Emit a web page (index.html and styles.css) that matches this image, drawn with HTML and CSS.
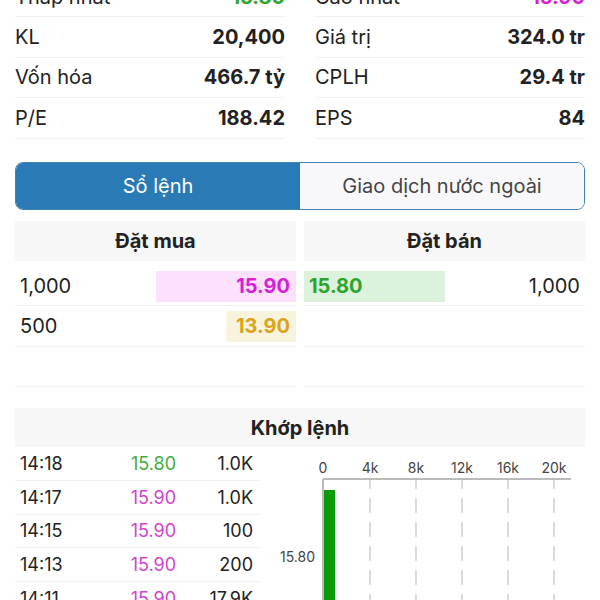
FILE: index.html
```html
<!DOCTYPE html>
<html lang="vi">
<head>
    <meta charset="UTF-8">
    <meta name="viewport" content="width=device-width, initial-scale=1.0">
    <title>Chi tiết cổ phiếu</title>
    <link rel="stylesheet" href="styles.css">
</head>
<body>
    <div class="page">
        <div class="stats">
            <div class="stats-col">
                <div class="stat-row"><span>Thấp nhất</span><b class="up">15.80</b></div>
                <div class="stat-row"><span>KL</span><b>20,400</b></div>
                <div class="stat-row"><span>Vốn hóa</span><b>466.7 tỷ</b></div>
                <div class="stat-row"><span>P/E</span><b>188.42</b></div>
            </div>
            <div class="stats-col">
                <div class="stat-row"><span>Cao nhất</span><b class="ceil">15.90</b></div>
                <div class="stat-row"><span>Giá trị</span><b>324.0 tr</b></div>
                <div class="stat-row"><span>CPLH</span><b>29.4 tr</b></div>
                <div class="stat-row"><span>EPS</span><b>84</b></div>
            </div>
        </div>

        <div class="tabs">
            <div class="tab active">Sổ lệnh</div>
            <div class="tab">Giao dịch nước ngoài</div>
        </div>

        <div class="orderbook">
            <div class="book-side buy">
                <div class="book-head">Đặt mua</div>
                <div class="book-row">
                    <span class="qty">1,000</span>
                    <span class="bar ceil-bg" style="width: 50%">15.90</span>
                </div>
                <div class="book-row">
                    <span class="qty">500</span>
                    <span class="bar ref-bg" style="width: 25%">13.90</span>
                </div>
                <div class="book-row"></div>
            </div>
            <div class="book-side sell">
                <div class="book-head">Đặt bán</div>
                <div class="book-row">
                    <span class="bar up-bg" style="width: 50%">15.80</span>
                    <span class="qty">1,000</span>
                </div>
                <div class="book-row"></div>
                <div class="book-row"></div>
            </div>
        </div>

        <div class="matched">
            <div class="matched-head">Khớp lệnh</div>
            <div class="matched-body">
                <div class="ticks">
                    <div class="tick"><span>14:18</span><span class="t-up">15.80</span><span>1.0K</span></div>
                    <div class="tick"><span>14:17</span><span class="t-ceil">15.90</span><span>1.0K</span></div>
                    <div class="tick"><span>14:15</span><span class="t-ceil">15.90</span><span>100</span></div>
                    <div class="tick"><span>14:13</span><span class="t-ceil">15.90</span><span>200</span></div>
                    <div class="tick"><span>14:11</span><span class="t-ceil">15.90</span><span>17.9K</span></div>
                </div>
                <svg class="chart" width="325" height="200" viewBox="0 0 325 200">
                    <g class="axis-labels" text-anchor="middle">
                        <text x="63" y="26">0</text>
                        <text x="110" y="26">4k</text>
                        <text x="156" y="26">8k</text>
                        <text x="202" y="26">12k</text>
                        <text x="248" y="26">16k</text>
                        <text x="294" y="26">20k</text>
                    </g>
                    <g class="grid">
                        <line x1="110" y1="32" x2="110" y2="200"/>
                        <line x1="156" y1="32" x2="156" y2="200"/>
                        <line x1="202" y1="32" x2="202" y2="200"/>
                        <line x1="248" y1="32" x2="248" y2="200"/>
                        <line x1="294" y1="32" x2="294" y2="200"/>
                    </g>
                    <rect class="vol-bar" x="63" y="43" width="12" height="160"/>
                    <line class="axis" x1="63" y1="32" x2="311" y2="32"/>
                    <line class="axis" x1="63" y1="32" x2="63" y2="200"/>
                    <text class="price-label" x="55" y="115" text-anchor="end">15.80</text>
                </svg>
            </div>
        </div>
    </div>
</body>
</html>
```

FILE: styles.css
```css
body {
    margin: 0;
    font-family: Inter, "Noto Sans", sans-serif;
    color: #222;
    background: white;
    overflow: hidden;
}

/* the screenshot is scrolled a little down the page */
.page {
    margin-top: -23px;
    padding: 0 15px;
}

.up { color: #2ca52c; }
.ceil { color: #d61fd6; }

.stats {
    display: grid;
    grid-template-columns: 1fr 1fr;
    gap: 30px;
}

.stat-row {
    height: 40.4px;
    box-sizing: border-box;
    display: flex;
    justify-content: space-between;
    align-items: center;
    border-bottom: 1px solid #efefef;
    font-size: 20px;
}

.stat-row b {
    font-weight: 700;
}

.tabs {
    display: flex;
    margin-top: 23px;
    height: 48px;
    border: 1.5px solid #3f82b6;
    border-radius: 8px;
    overflow: hidden;
    box-sizing: border-box;
}

.tab {
    flex: 1;
    display: flex;
    justify-content: center;
    align-items: center;
    font-size: 20px;
    color: #444;
    background: #f8f8fa;
}

.tab.active {
    background: #2a7ab5;
    color: white;
}

.orderbook {
    display: grid;
    grid-template-columns: 1fr 1fr;
    gap: 8px;
    margin-top: 11px;
}

.book-head {
    height: 40px;
    display: flex;
    justify-content: center;
    align-items: center;
    background: #f7f7f7;
    font-size: 20px;
    font-weight: 700;
    margin-bottom: 5px;
}

.book-row {
    height: 40.5px;
    box-sizing: border-box;
    display: flex;
    align-items: flex-start;
    border-bottom: 1px solid #efefef;
    padding-top: 5px;
    font-size: 20px;
}

.book-row:first-of-type {
    height: 41px;
}

.qty {
    flex: 1;
    line-height: 31px;
    padding: 0 5px;
}

.sell .qty {
    text-align: right;
}

.bar {
    height: 31px;
    line-height: 31px;
    font-weight: 700;
    box-sizing: border-box;
    padding: 0 6px 0 5px;
}

.buy .bar {
    text-align: right;
}

.ceil-bg {
    background: #fde0fb;
    color: #d61fd6;
}

.ref-bg {
    background: #f8f3dd;
    color: #d8a51c;
}

.up-bg {
    background: #dcf2dc;
    color: #2ca52c;
}

.matched {
    margin-top: 21px;
}

.matched-head {
    height: 39px;
    display: flex;
    justify-content: center;
    align-items: center;
    background: #f7f7f7;
    font-size: 20px;
    font-weight: 700;
}

.matched-body {
    display: flex;
}

.ticks {
    width: 245px;
}

.tick {
    height: 33.75px;
    box-sizing: border-box;
    display: grid;
    grid-template-columns: 1fr 70px 77px;
    align-items: center;
    padding: 0 7px 0 5px;
    border-bottom: 1px solid #efefef;
    font-size: 18px;
}

.tick span:nth-child(2),
.tick span:nth-child(3) {
    text-align: right;
}

.t-up { color: #3fae3f; }
.t-ceil { color: #cf45cf; }

.chart {
    display: block;
    font-family: Inter, "Noto Sans", sans-serif;
}

.axis-labels text,
.price-label {
    font-size: 14px;
    fill: #444;
}

.grid line {
    stroke: #b5b5b5;
    stroke-width: 1;
    stroke-dasharray: 15 9;
    stroke-dashoffset: 5;
}

.axis {
    stroke: #bbb;
    stroke-width: 2;
}

.vol-bar {
    fill: #0a9a0a;
}
```
